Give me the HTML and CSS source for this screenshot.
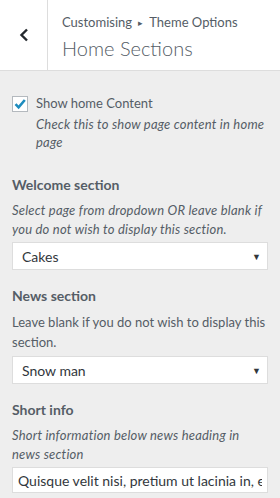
FILE: index.html
```html
<!DOCTYPE html>
<html lang="en">
<head>
    <meta charset="UTF-8">
    <meta name="viewport" content="width=device-width, initial-scale=1.0">
    <title>Home Sections</title>
    <link rel="stylesheet" href="styles.css">
</head>
<body>
    <div class="panel-header">
        <button class="back-btn" type="button" aria-label="Back">
            <svg width="12" height="14" viewBox="0 0 12 14"><path d="M9 1.5 L3.5 7 L9 12.5" fill="none" stroke="#23282d" stroke-width="2.4"/></svg>
        </button>
        <div class="panel-title">
            <span class="breadcrumb">Customising <span class="sep">&#9656;</span> Theme Options</span>
            <h3>Home Sections</h3>
        </div>
    </div>

    <div class="controls">
        <div class="control check-control">
            <span class="checkbox">
                <svg width="14" height="14" viewBox="0 0 14 14"><path d="M2.5 7.2 L5.6 10.3 L11.8 3" fill="none" stroke="#1e8cbe" stroke-width="2.6"/></svg>
            </span>
            <div>
                <label>Show home Content</label>
                <span class="desc italic">Check this to show page content in home page</span>
            </div>
        </div>

        <div class="control">
            <span class="ctl-title">Welcome section</span>
            <span class="desc italic">Select page from dropdown OR leave blank if you do not wish to display this section.</span>
            <div class="select">Cakes<span class="arrow">&#9660;</span></div>
        </div>

        <div class="control">
            <span class="ctl-title">News section</span>
            <span class="desc plain">Leave blank if you do not wish to display this section.</span>
            <div class="select">Snow man<span class="arrow">&#9660;</span></div>
        </div>

        <div class="control">
            <span class="ctl-title">Short info</span>
            <span class="desc italic">Short information below news heading in news section</span>
            <input class="text-input" type="text" value="Quisque velit nisi, pretium ut lacinia in, elementum id enim.">
        </div>
    </div>
</body>
</html>
```
FILE: styles.css
```css
body {
    font-family: Lato, sans-serif;
    font-size: 13px;
    color: #555d66;
    background-color: #eee;
    margin: 0;
}

.panel-header {
    display: flex;
    height: 70px;
    background: #fff;
    border-bottom: 1px solid #ddd;
}

.back-btn {
    width: 48px;
    border: none;
    border-right: 1px solid #ddd;
    background: #fff;
    padding: 0;
    display: flex;
    align-items: center;
    justify-content: center;
}

.panel-title {
    padding: 12px 0 0 14px;
}

.breadcrumb {
    display: block;
    font-size: 13px;
    line-height: 20px;
    color: #555d66;
}

.sep {
    font-size: 9px;
    vertical-align: 1px;
    margin: 0 3px;
}

.panel-title h3 {
    margin: 2px 0 0;
    font-size: 20px;
    font-weight: 300;
    line-height: 27px;
    color: #555d66;
}

.controls {
    padding: 22px 12px 0;
}

.control {
    margin-bottom: 16px;
}

.check-control {
    display: flex;
    gap: 8px;
    margin-bottom: 21px;
}

.checkbox {
    box-sizing: border-box;
    width: 16px;
    height: 16px;
    margin-top: 3px;
    flex: none;
    display: flex;
    align-items: center;
    justify-content: center;
    background: #fff;
    border: 1px solid #b4b9be;
}

.check-control label {
    display: block;
    line-height: 20px;
}

.check-control .desc {
    margin-top: 2px;
    line-height: 18px;
}

.ctl-title {
    display: block;
    font-size: 14px;
    font-weight: 700;
    line-height: 20px;
    margin-bottom: 6px;
}

.desc {
    display: block;
    line-height: 19px;
    margin-bottom: 3px;
}

.plain {
    line-height: 20px;
    margin-bottom: 4px;
}

.italic {
    font-style: italic;
    letter-spacing: 0.2px;
}

.select {
    display: flex;
    justify-content: space-between;
    align-items: center;
    height: 26px;
    padding: 0 6px 0 9px;
    background: #fff;
    border: 1px solid #ddd;
    font-size: 14px;
    color: #32373c;
}

.arrow {
    font-size: 9px;
    color: #32373c;
}

.text-input {
    box-sizing: border-box;
    width: 100%;
    height: 26px;
    padding: 0 5px;
    border: 1px solid #ddd;
    font-family: Lato, sans-serif;
    font-size: 14px;
    color: #32373c;
}
```
